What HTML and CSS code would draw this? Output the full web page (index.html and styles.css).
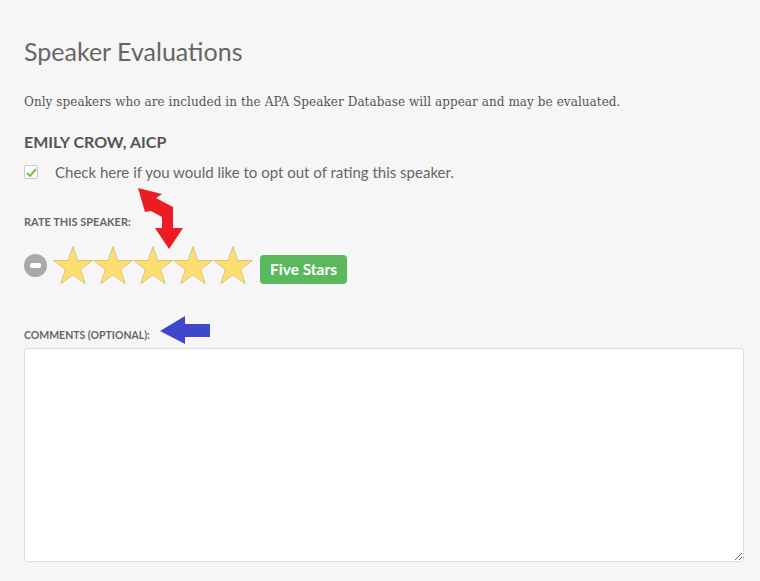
FILE: index.html
```html
<!DOCTYPE html>
<html lang="en">

<head>
    <meta charset="UTF-8" />
    <title>Speaker Evaluations</title>
    <link rel="stylesheet" href="styles.css">
</head>

<body>
    <div class="container">
        <h1>Speaker Evaluations</h1>
        <p class="intro">Only speakers who are included in the APA Speaker Database will appear and may be evaluated.</p>

        <div class="speaker">
            <h2>EMILY CROW, AICP</h2>
            <label class="opt-out">
                <span class="box">
                    <svg width="11" height="9" viewBox="0 0 11 9"><path d="M1 5 L4 8 L10 1" fill="none" stroke="#7cbd3c" stroke-width="2"/></svg>
                </span>
                Check here if you would like to opt out of rating this speaker.
            </label>

            <div class="label">RATE THIS SPEAKER:</div>
            <div class="rating">
                <span class="clear"><span class="bar"></span></span>
                <div class="stars">
                    <svg class="star" viewBox="0 0 40 40"><polygon points="20,1.5 24.8,15.5 39.5,15.5 27.7,24.3 32.1,38.5 20,29.8 7.9,38.5 12.3,24.3 0.5,15.5 15.2,15.5"/></svg>
                    <svg class="star" viewBox="0 0 40 40"><polygon points="20,1.5 24.8,15.5 39.5,15.5 27.7,24.3 32.1,38.5 20,29.8 7.9,38.5 12.3,24.3 0.5,15.5 15.2,15.5"/></svg>
                    <svg class="star" viewBox="0 0 40 40"><polygon points="20,1.5 24.8,15.5 39.5,15.5 27.7,24.3 32.1,38.5 20,29.8 7.9,38.5 12.3,24.3 0.5,15.5 15.2,15.5"/></svg>
                    <svg class="star" viewBox="0 0 40 40"><polygon points="20,1.5 24.8,15.5 39.5,15.5 27.7,24.3 32.1,38.5 20,29.8 7.9,38.5 12.3,24.3 0.5,15.5 15.2,15.5"/></svg>
                    <svg class="star" viewBox="0 0 40 40"><polygon points="20,1.5 24.8,15.5 39.5,15.5 27.7,24.3 32.1,38.5 20,29.8 7.9,38.5 12.3,24.3 0.5,15.5 15.2,15.5"/></svg>
                </div>
                <span class="badge">Five Stars</span>
            </div>

            <div class="label comments-label">COMMENTS (OPTIONAL):</div>
            <textarea class="comments"></textarea>

            <!-- annotation arrows -->
            <svg class="arrow-red" width="60" height="70" viewBox="130 180 60 70">
                <polygon points="138,188 162,194 156,198 173,207 173,228 183,228 169,249 155,228 162,228 162,217 151,211 145,212" fill="#ec1c24"/>
            </svg>
            <svg class="arrow-blue" width="60" height="40" viewBox="155 310 60 40">
                <polygon points="160,331 185,316 185,324 210,324 210,337 185,337 185,344" fill="#3f48cc"/>
            </svg>
        </div>
    </div>
</body>

</html>
```

FILE: styles.css
```css
body {
    margin: 0;
    background-color: #f6f6f6;
    color: #666;
    font-family: Lato, sans-serif;
}

.container {
    position: relative;
    padding: 36px 16px 0 24px;
}

h1 {
    margin: 0;
    font-size: 25px;
    font-weight: normal;
    line-height: 30px;
    color: #666;
}

.intro {
    margin: 26px 0 0;
    font-family: "DejaVu Serif", serif;
    font-size: 12px;
    letter-spacing: 0.07px;
    line-height: 20px;
    color: #555;
}

h2 {
    margin: 20px 0 0;
    font-size: 16px;
    font-weight: bold;
    line-height: 20px;
    color: #555;
}

.opt-out {
    display: flex;
    align-items: center;
    gap: 17px;
    margin-top: 10px;
    font-size: 15px;
    line-height: 20px;
}

.box {
    width: 12px;
    height: 12px;
    border: 1px solid #ccc;
    border-radius: 2px;
    background-color: #fff;
    display: flex;
    align-items: center;
    justify-content: center;
}

.label {
    margin-top: 33px;
    font-size: 11px;
    font-weight: bold;
    line-height: 14px;
    color: #666;
}

.rating {
    display: flex;
    align-items: center;
    margin-top: 16px;
}

.clear {
    width: 23px;
    height: 23px;
    border-radius: 50%;
    background-color: #a9a9a9;
    display: flex;
    align-items: center;
    justify-content: center;
    margin-right: 6px;
}

.bar {
    width: 11px;
    height: 5px;
    border-radius: 2px;
    background-color: #fff;
}

.stars {
    display: flex;
}

.star {
    width: 40px;
    height: 40px;
    fill: #fddf6f;
    stroke: #dcc47c;
    stroke-width: 1;
}

.badge {
    align-self: flex-end;
    margin: 0 0 1px 7px;
    padding: 0 10px;
    height: 29px;
    line-height: 29px;
    border-radius: 4px;
    background-color: #5cb85c;
    color: #fff;
    font-weight: bold;
    font-size: 15.5px;
}

.comments-label {
    margin-top: 43px;
    font-size: 10.5px;
}

.comments {
    display: block;
    box-sizing: border-box;
    width: 720px;
    height: 214px;
    margin-top: 6px;
    border: 1px solid #ddd;
    border-radius: 3px;
    background-color: #fff;
}

.arrow-red {
    position: absolute;
    left: 130px;
    top: 180px;
}

.arrow-blue {
    position: absolute;
    left: 155px;
    top: 310px;
}
```
